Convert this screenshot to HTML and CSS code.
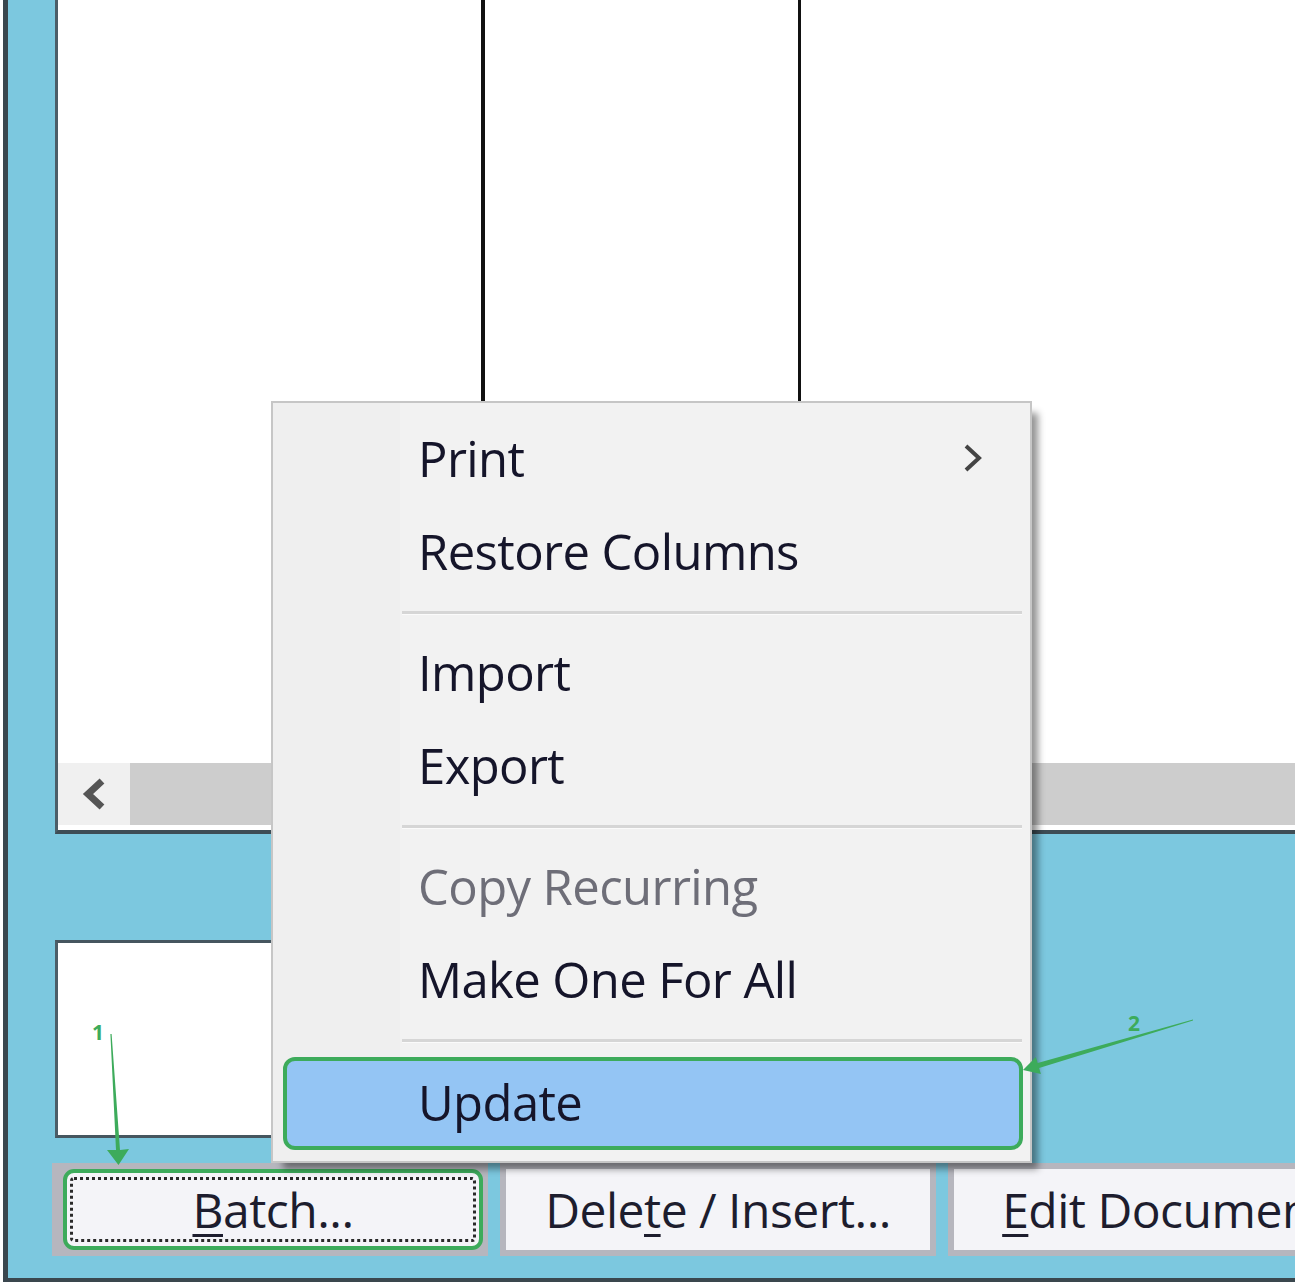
FILE: index.html
```html
<!DOCTYPE html>
<html>
<head>
<meta charset="utf-8">
<link rel="stylesheet" href="styles.css">
</head>
<body>
<div class="window">
  <div class="grid">
    <div class="rows">
      <div class="col col1"></div>
      <div class="col col2"></div>
      <div class="col col3"></div>
    </div>
    <div class="hscroll">
      <div class="scroll-btn">
        <svg width="30" height="34" viewBox="0 0 30 34"><polyline points="23,4 9,17 23,30" fill="none" stroke="#555" stroke-width="7" stroke-linejoin="miter"/></svg>
      </div>
      <div class="scroll-track"></div>
    </div>
  </div>
  <div class="notes"></div>
  <div class="buttons">
    <div class="btn batch">
      <div class="annot">
        <div class="focus"><span><u>B</u>atch...</span></div>
      </div>
    </div>
    <div class="btn plain delete"><span>Dele<u>t</u>e / Insert...</span></div>
    <div class="btn plain edit"><span><u>E</u>dit Document...</span></div>
  </div>
</div>

<div class="menu">
  <div class="item"><span>Print</span>
    <svg class="sub" width="24" height="34" viewBox="0 0 24 34"><polyline points="5,4 18,16 5,28" fill="none" stroke="#444" stroke-width="4"/></svg>
  </div>
  <div class="item"><span>Restore Columns</span></div>
  <div class="sep"></div>
  <div class="item"><span>Import</span></div>
  <div class="item"><span>Export</span></div>
  <div class="sep"></div>
  <div class="item disabled"><span>Copy Recurring</span></div>
  <div class="item"><span>Make One For All</span></div>
  <div class="sep"></div>
  <div class="item hot"><span>Update</span></div>
</div>

<svg class="annotations" width="1295" height="1286" viewBox="0 0 1295 1286">
  <text x="92" y="1040" class="num">1</text>
  <polygon points="110.4,1034 111.6,1034 120,1150 129,1149 118.5,1165 107,1150 116,1150" class="arrow"/>
  <text x="1128" y="1031" class="num">2</text>
  <polygon points="1193,1019.6 1037.7,1063.1 1035.9,1056.9 1023,1070 1040.9,1074.1 1039.1,1067.9 1193,1020.4" class="arrow"/>
</svg>
</body>
</html>
```
FILE: styles.css
```css
html, body {
  margin: 0;
  padding: 0;
}
body {
  width: 1295px;
  height: 1286px;
  overflow: hidden;
  background: #ffffff;
  position: relative;
  font-family: "Open Sans", "Noto Sans", sans-serif;
}
.window {
  margin-left: 3px;
  height: 1278px;
  border-left: 5px solid #3a474e;
  border-bottom: 4px solid #3a474e;
  background: #7cc8df;
  padding-left: 47px;
  display: flex;
  flex-direction: column;
  overflow: hidden;
}
.grid {
  height: 830px;
  flex: none;
  border-left: 3px solid #4c5e68;
  border-bottom: 4px solid #3e4d55;
  background: #ffffff;
  display: flex;
  flex-direction: column;
}
.rows {
  flex: 1;
  display: flex;
}
.col1 {
  width: 423px;
  border-right: 4px solid #111;
}
.col2 {
  width: 313px;
  border-right: 3px solid #111;
}
.col3 {
  flex: 1;
}
.hscroll {
  height: 62px;
  margin-bottom: 5px;
  display: flex;
}
.scroll-btn {
  width: 72px;
  background: #f0f0f0;
  display: flex;
  align-items: center;
  justify-content: center;
}
.scroll-track {
  flex: 1;
  background: #cdcdcd;
}
.notes {
  flex: none;
  margin-top: 106px;
  height: 192px;
  width: 900px;
  background: #fff;
  border-top: 3px solid #46565f;
  border-left: 3px solid #4c5e68;
  border-bottom: 3px solid #46565f;
}
.buttons {
  flex: none;
  margin-top: 25px;
  margin-left: -3px;
  height: 93px;
  display: flex;
  gap: 12px;
}
.btn {
  flex: none;
  box-sizing: border-box;
  height: 93px;
  font-size: 48px;
  letter-spacing: -0.5px;
  color: #1d1d2e;
}
.btn u {
  text-decoration-thickness: 3px;
  text-underline-offset: 6px;
}
.batch {
  width: 436px;
  background: #b6b6be;
  padding: 6px 5px 6px 11px;
}
.annot {
  height: 100%;
  box-sizing: border-box;
  border: 4px solid #3dab5b;
  border-radius: 11px;
  background: #f4f4f8;
  padding: 4px 3px;
}
.focus {
  height: 100%;
  box-sizing: border-box;
  border: 3px dotted #2a2a2a;
  border-radius: 4px;
  display: flex;
  align-items: center;
  justify-content: center;
}
.plain {
  background: #f4f4f8;
  border: 6px solid #b6b6be;
  display: flex;
  align-items: center;
  justify-content: center;
}
.delete {
  width: 436px;
}
.edit {
  width: 470px;
}
.menu {
  position: absolute;
  left: 271px;
  top: 401px;
  width: 757px;
  height: 748px;
  border: 2px solid #c6c6c6;
  background: linear-gradient(to right, #efefef 127px, #f2f2f2 127px);
  box-shadow: 9px 9px 7px -3px rgba(0, 0, 0, 0.42);
  padding-top: 10px;
  box-sizing: content-box;
}
.item {
  height: 93px;
  display: flex;
  align-items: center;
  position: relative;
  padding-left: 145px;
  font-size: 49px;
  letter-spacing: -0.6px;
  color: #15152a;
  box-sizing: border-box;
}
.item span {
  margin-top: -4px;
}
.item.disabled {
  color: #6e6e78;
}
.item .sub {
  position: absolute;
  left: 688px;
  top: 29px;
}
.sep {
  height: 28px;
  display: flex;
  align-items: center;
  margin-left: 129px;
  margin-right: 8px;
}
.sep::before {
  content: "";
  flex: 1;
  height: 3px;
  background: #d6d6d6;
  border-bottom: 1px solid #fbfbfb;
}
.item.hot {
  margin: 2px 7px 0 10px;
  height: 93px;
  border: 4px solid #3dab5b;
  border-radius: 12px;
  background: #94c5f4;
  padding-left: 131px;
}
.annotations {
  position: absolute;
  left: 0;
  top: 0;
  pointer-events: none;
}
.annotations .num {
  font-family: "Open Sans", sans-serif;
  font-weight: 700;
  font-size: 21px;
  fill: #3dab5b;
}
.annotations .arrow {
  fill: #3dab5b;
}
```
